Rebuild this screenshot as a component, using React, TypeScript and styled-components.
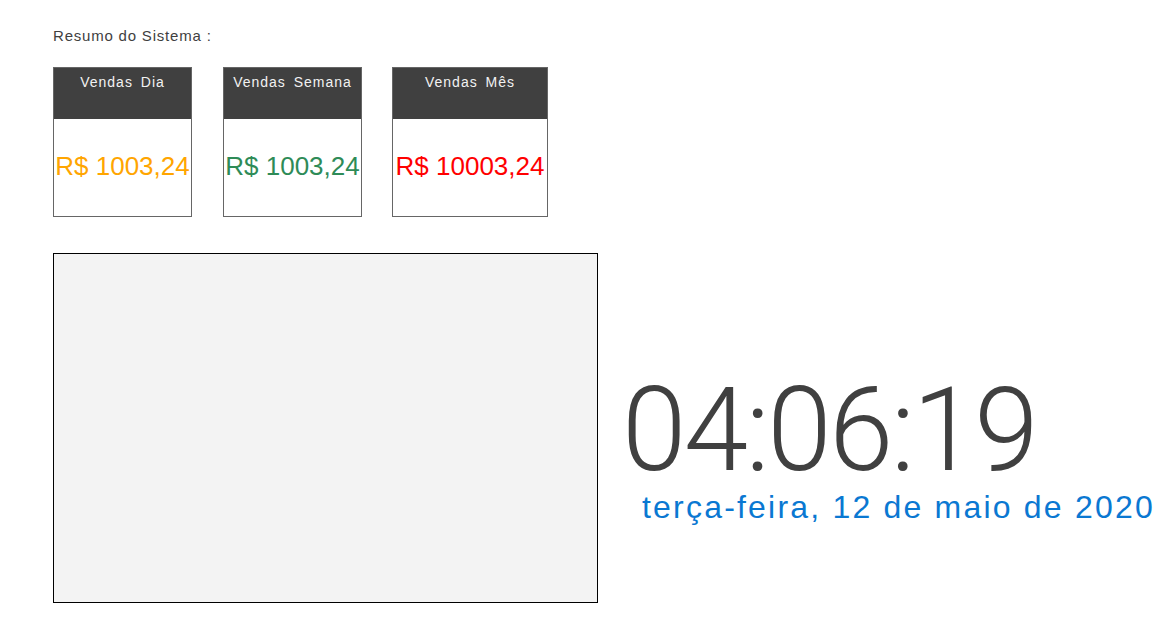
import React from "react";
import styled, { createGlobalStyle } from "styled-components";

const Global = createGlobalStyle`
  html, body { margin: 0; padding: 0; background: #ffffff; }
  body { font-family: "Liberation Sans", Arial, sans-serif; }
`;

const Page = styled.div`
  padding: 27px 0 0 53px;
  width: 1166px;
  height: 629px;
  box-sizing: border-box;
  overflow: hidden;
`;

const Title = styled.div`
  font-size: 15px;
  line-height: 17px;
  letter-spacing: 0.8px;
  color: #3f3f3f;
  height: 17px;
`;

const Cards = styled.div`
  display: flex;
  margin-top: 23px;
`;

const Card = styled.div<{ $w: number; $ml: number }>`
  width: ${(p) => p.$w}px;
  margin-left: ${(p) => p.$ml}px;
  height: 150px;
  border: 1px solid #666666;
  box-sizing: border-box;
  display: flex;
  flex-direction: column;
  background: #ffffff;
`;

const CardHeader = styled.div`
  height: 51px;
  background: #404040;
  color: #f2f2f2;
  font-size: 14px;
  letter-spacing: 1px;
  word-spacing: 3px;
  text-align: center;
  padding-top: 6px;
  box-sizing: border-box;
  white-space: nowrap;
`;

const CardBody = styled.div<{ $color: string }>`
  flex: 1;
  display: flex;
  align-items: center;
  justify-content: center;
  color: ${(p) => p.$color};
  font-size: 26px;
  white-space: nowrap;
  padding-bottom: 2px;
`;

const Bottom = styled.div`
  display: flex;
  margin-top: 36px;
`;

const Panel = styled.div`
  width: 545px;
  height: 350px;
  background: #f3f3f3;
  border: 1px solid #000000;
  box-sizing: border-box;
`;

const ClockBlock = styled.div`
  margin-left: 24px;
  padding-top: 127px;
  display: flex;
  flex-direction: column;
`;

const Clock = styled.div`
  font-family: Roboto, "Liberation Sans", sans-serif;
  font-weight: 300;
  font-size: 116px;
  line-height: 100px;
  letter-spacing: -2.6px;
  color: #404040;
  white-space: nowrap;
`;

const DateLine = styled.div`
  margin-left: 20px;
  margin-top: 9px;
  font-size: 32px;
  line-height: 36px;
  letter-spacing: 2.2px;
  color: #0a78d2;
  white-space: nowrap;
`;

const cards = [
  { title: "Vendas Dia", value: "R$ 1003,24", color: "#ffa500", w: 139, ml: 0 },
  { title: "Vendas Semana", value: "R$ 1003,24", color: "#2e8b57", w: 139, ml: 31 },
  { title: "Vendas Mês", value: "R$ 10003,24", color: "#ff0000", w: 156, ml: 30 },
];

export default function App() {
  return (
    <Page>
      <Global />
      <Title>Resumo do Sistema :</Title>
      <Cards>
        {cards.map((c) => (
          <Card key={c.title} $w={c.w} $ml={c.ml}>
            <CardHeader>{c.title}</CardHeader>
            <CardBody $color={c.color}>{c.value}</CardBody>
          </Card>
        ))}
      </Cards>
      <Bottom>
        <Panel />
        <ClockBlock>
          <Clock>04:06:19</Clock>
          <DateLine>terça-feira, 12 de maio de 2020</DateLine>
        </ClockBlock>
      </Bottom>
    </Page>
  );
}
